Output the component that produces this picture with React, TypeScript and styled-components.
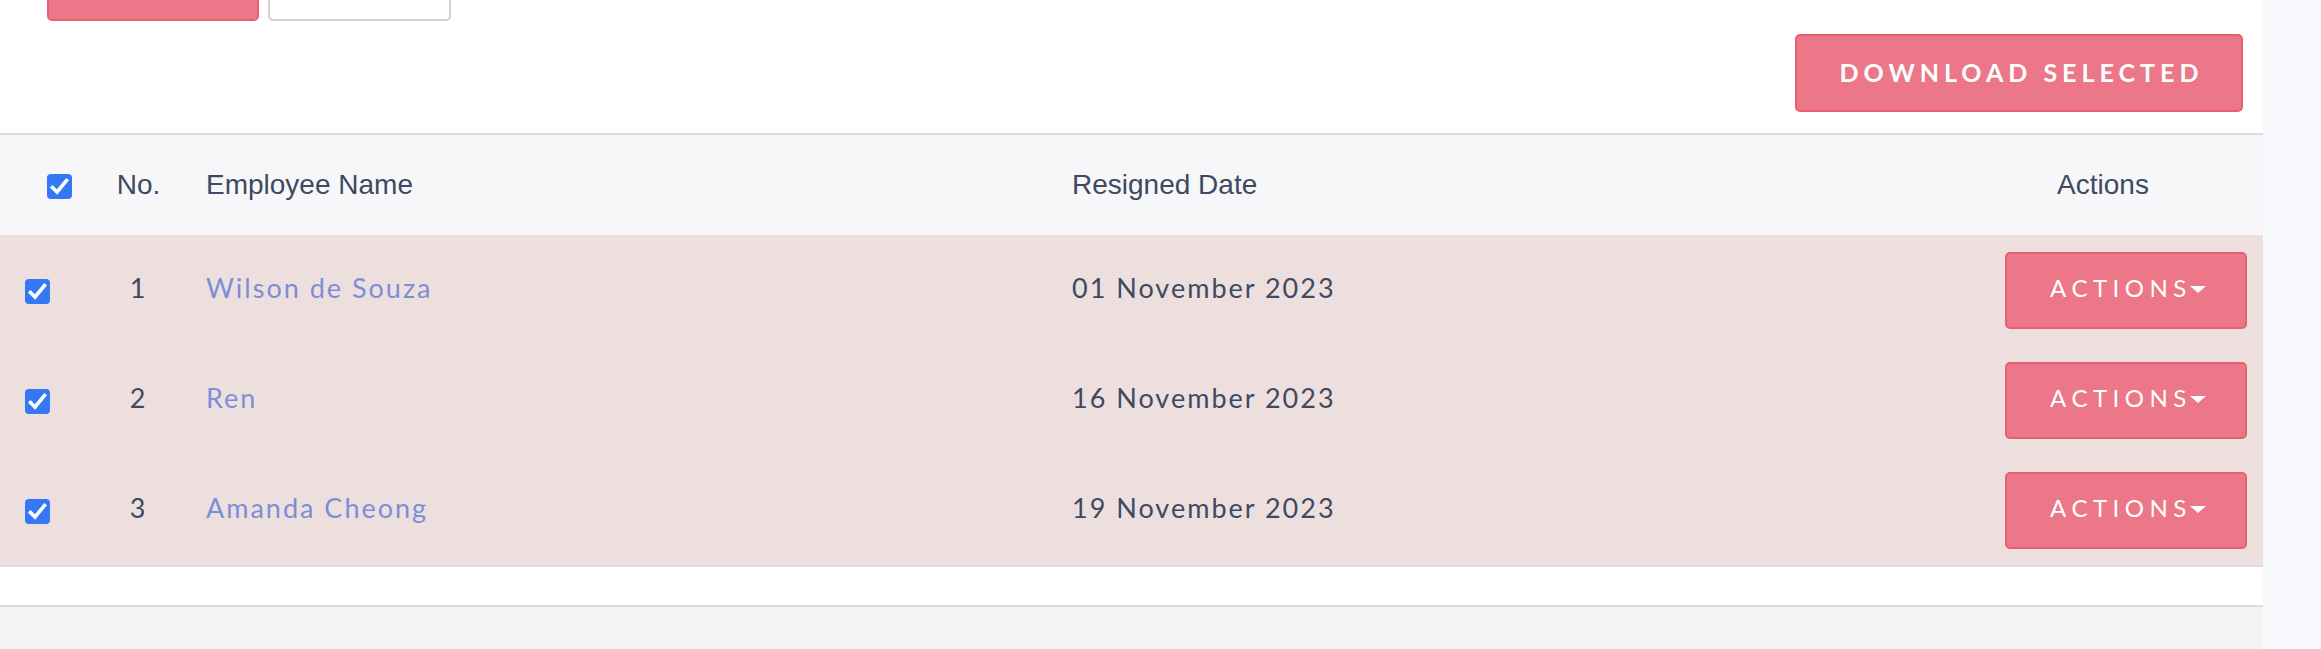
import styled, { createGlobalStyle } from "styled-components"

const GlobalStyle = createGlobalStyle`
  html, body {
    margin: 0;
    padding: 0;
    background: #f8f9fc;
  }
  body {
    font-family: "Lato", "Liberation Sans", sans-serif;
    color: #3e4a5f;
  }
`

const Page = styled.div`
  display: flex;
  width: 2321px;
  height: 649px;
  overflow: hidden;
  background: #f8f9fc;
`

const Main = styled.div`
  width: 2263px;
  display: flex;
  flex-direction: column;
  box-shadow: 1px 0 2px rgba(0, 0, 0, 0.06);
`

const Card = styled.div`
  background: #fff;
`

const Toolbar = styled.div`
  display: flex;
  flex-direction: column;
  padding: 0 20px 21px 47px;
  margin-top: -57px;
`

const FilterRow = styled.div`
  display: flex;
  gap: 9px;
`

const DownloadRow = styled.div`
  display: flex;
  justify-content: flex-end;
  margin-top: 13px;
`

const Button = styled.button<{ $variant?: "primary" | "outline"; $width: number }>`
  box-sizing: border-box;
  width: ${(p) => p.$width}px;
  height: 78px;
  border-radius: 5px;
  border: 2px solid ${(p) => (p.$variant === "outline" ? "#cfcfcf" : "#e8606f")};
  background: ${(p) => (p.$variant === "outline" ? "#fff" : "#ec7788")};
  color: #fff;
  font-family: "Lato", sans-serif;
  text-transform: uppercase;
  display: flex;
  align-items: center;
  justify-content: center;
  padding: 0;
  cursor: pointer;
`

const DownloadButton = styled(Button)`
  font-size: 25px;
  font-weight: 700;
  letter-spacing: 5px;
  padding: 0 0 3px 5px;
`

const ActionButton = styled(Button)`
  height: 77px;
  font-size: 24px;
  font-weight: 400;
  letter-spacing: 5.5px;
  padding: 0 0 5px 4px;
`

const Caret = styled.span`
  width: 0;
  height: 0;
  margin: 4px 0 0 -2px;
  border-left: 8px solid transparent;
  border-right: 8px solid transparent;
  border-top: 7px solid #fff;
`

const Table = styled.div`
  border-top: 2px solid #dcdcdc;
  border-bottom: 2px solid #dcdcdc;
`

const Row = styled.div<{ $head?: boolean }>`
  display: grid;
  grid-template-columns: 95px 87px 866px 895px 1fr;
  align-items: center;
  height: ${(p) => (p.$head ? 100 : 110)}px;
  background: ${(p) => (p.$head ? "#f7f7f9" : "#eedfdf")};
`

const HeadCell = styled.div<{ $align?: "left" | "center" }>`
  font-family: "Liberation Sans", Arial, sans-serif;
  font-size: 28px;
  color: #3e4a5f;
  text-align: ${(p) => p.$align ?? "left"};
  padding-left: ${(p) => (p.$align === "center" ? 0 : 24)}px;
`

const Cell = styled.div<{ $align?: "left" | "center"; $tone?: "link" }>`
  font-size: 27px;
  letter-spacing: 2px;
  color: ${(p) => (p.$tone === "link" ? "#7b8ed6" : "#3e4a5f")};
  text-align: ${(p) => p.$align ?? "left"};
  padding-left: ${(p) => (p.$align === "center" ? 0 : 24)}px;
  padding-bottom: 5px;
`

const ActionCell = styled.div`
  display: flex;
  justify-content: flex-end;
  padding-right: 16px;
`

const CheckCell = styled.div<{ $inset: number }>`
  display: flex;
  align-items: center;
  padding-left: ${(p) => p.$inset}px;
  padding-top: 2px;
`

const Check = styled.span`
  width: 25px;
  height: 25px;
  border-radius: 4px;
  background: #3478f6;
  display: flex;
  align-items: center;
  justify-content: center;
`

const Footer = styled.div`
  height: 38px;
  background: #fff;
  border-bottom: 2px solid #dcdcdc;
`

const Below = styled.div`
  flex: 1;
  background: #f4f4f4;
`

const Gutter = styled.div`
  flex: 1;
  background: #f8f9fc;
`

function Checkbox() {
  return (
    <Check>
      <svg width="25" height="25" viewBox="0 0 25 25">
        <path d="M5.5 13.5 L10 18 L19.5 6.5" fill="none" stroke="#fff" strokeWidth="3.6" strokeLinecap="square" />
      </svg>
    </Check>
  )
}

const employees = [
  { name: "Wilson de Souza", date: "01 November 2023" },
  { name: "Ren", date: "16 November 2023" },
  { name: "Amanda Cheong", date: "19 November 2023" },
]

export default function App() {
  return (
    <>
      <GlobalStyle />
      <Page>
        <Main>
          <Card>
            <Toolbar>
              <FilterRow>
                <Button $width={212} aria-label="Filter" />
                <Button $variant="outline" $width={183} aria-label="Reset" />
              </FilterRow>
              <DownloadRow>
                <DownloadButton $width={448}>Download Selected</DownloadButton>
              </DownloadRow>
            </Toolbar>
            <Table>
              <Row $head>
                <CheckCell $inset={47}>
                  <Checkbox />
                </CheckCell>
                <HeadCell $align="center">No.</HeadCell>
                <HeadCell>Employee Name</HeadCell>
                <HeadCell>Resigned Date</HeadCell>
                <HeadCell $align="center">Actions</HeadCell>
              </Row>
              {employees.map((e, i) => (
                <Row key={e.name}>
                  <CheckCell $inset={25}>
                    <Checkbox />
                  </CheckCell>
                  <Cell $align="center">{i + 1}</Cell>
                  <Cell $tone="link">{e.name}</Cell>
                  <Cell>{e.date}</Cell>
                  <ActionCell>
                    <ActionButton $width={242}>
                      Actions
                      <Caret />
                    </ActionButton>
                  </ActionCell>
                </Row>
              ))}
            </Table>
            <Footer />
          </Card>
          <Below />
        </Main>
        <Gutter />
      </Page>
    </>
  )
}
